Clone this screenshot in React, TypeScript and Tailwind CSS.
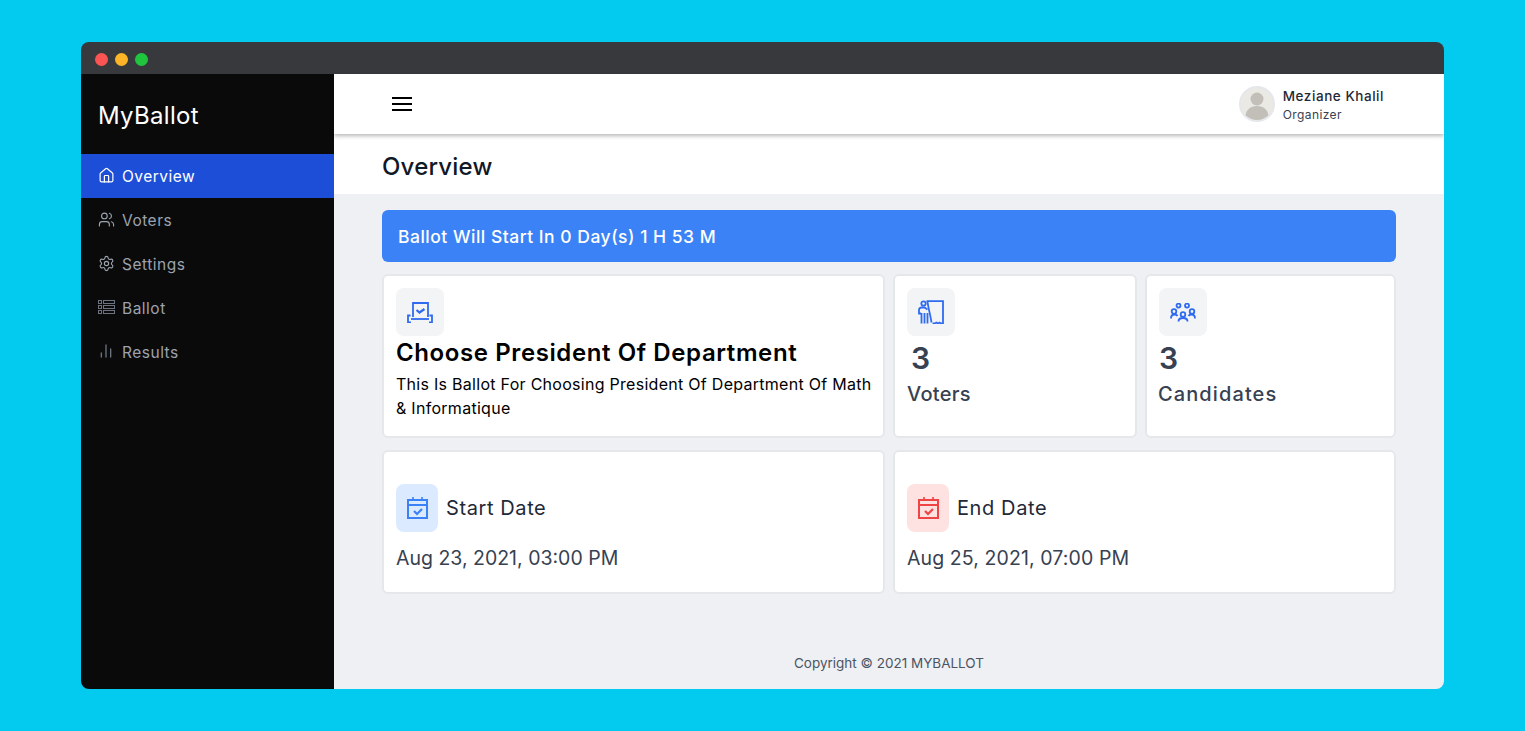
import React from "react";
import { Home, Users, Settings, ChartNoAxesColumn } from "lucide-react";

const BallotListIcon = ({ className }: { className?: string }) => (
  <svg viewBox="0 0 17 16" fill="none" stroke="currentColor" strokeWidth="1" className={className}>
    <rect x="0.5" y="1.500" width="3" height="3" />
    <rect x="0.5" y="6.500" width="3" height="3" />
    <rect x="0.5" y="11.500" width="3" height="3" />
    <rect x="5.500" y="1.500" width="11" height="3" />
    <rect x="5.500" y="6.500" width="11" height="3" />
    <rect x="5.500" y="11.500" width="11" height="3" />
  </svg>
);

const VoteBoxIcon = () => (
  <svg viewBox="0 0 26 21" fill="none" stroke="#2f6bf0" strokeWidth="1.800" className="w-[26px] h-[21px]">
    <path d="M6 15V1h15v14" />
    <path d="M9.500 8l3 2.500 5-3.500" strokeWidth="2.200" />
    <path d="M4 17h18" />
    <path d="M3.500 13.500H1v7h3M22.500 13.500H25v7h-3" />
  </svg>
);

const BoothIcon = () => (
  <svg viewBox="0 0 26 24" fill="none" stroke="#2f6bf0" strokeWidth="1.800" className="w-[26px] h-[24px]">
    <circle cx="5.500" cy="3.500" r="2.200" />
    <path d="M8.500 1.200h16.500v22.300h-2l-1.500-1-1.500 1-1.500-1-2 1h-2" />
    <path d="M9.500 1.500c.5 5 3 14 4 21" />
    <path d="M9.500 9.500L6.500 7.500H3.500C2 7.500 1 8.500 1 10v3.500h2" />
    <path d="M3.500 13v10.500M6.500 13v10.500M9.500 13v10.500" />
  </svg>
);

const GroupIcon = () => (
  <svg viewBox="0 0 26 19" fill="none" stroke="#2f6bf0" strokeWidth="1.800" className="w-[26px] h-[19px]">
    <circle cx="8.500" cy="2.600" r="2" />
    <circle cx="17" cy="2.600" r="2" />
    <circle cx="4" cy="8.500" r="2.300" />
    <circle cx="22" cy="8.500" r="2.300" />
    <circle cx="13" cy="11.500" r="2.300" />
    <path d="M1 15.500c0-2.500 1.500-4 3.500-4 1.500 0 2.500.5 3 1.500M25 15.500c0-2.500-1.500-4-3.500-4-1.500 0-2.500.5-3 1.500" />
    <path d="M8.500 18.500c0-2.500 2-3.500 4.500-3.500s4.500 1 4.500 3.500" />
  </svg>
);

const CalendarIcon = ({ color }: { color: string }) => (
  <svg viewBox="0 0 21 22" fill="none" stroke={color} strokeWidth="2" className="w-[21px] h-[22px]">
    <rect x="1" y="3" width="19" height="18" />
    <path d="M1 8h19" />
    <path d="M6 0v4M15 0v4" strokeWidth="1.600" />
    <path d="M7 14l3 3 5-5" strokeWidth="2.200" />
  </svg>
);

const NavItem = ({ label, icon, active }: { label: string; icon: React.ReactNode; active?: boolean }) => (
  <div
    className={`h-[44px] flex items-center gap-2 pl-[17px] text-[15.500px] tracking-[0.5px] ${
      active ? "bg-[#1d4ed8] text-white" : "text-[#9ca3af]"
    }`}
  >
    <span className="w-4 h-4 flex items-center justify-center -mt-[2px]">{icon}</span>
    <span className="mt-[1px]">{label}</span>
  </div>
);

const Card = ({ children, className }: { children: React.ReactNode; className?: string }) => (
  <div className={`bg-white border-2 border-[#e5e7eb] rounded-md px-3 ${className ?? ""}`}>{children}</div>
);

const IconBox = ({ children, bg, className }: { children: React.ReactNode; bg?: string; className?: string }) => (
  <div className={`h-12 rounded-lg flex items-center justify-center ${className ?? "w-12"} ${bg ?? "bg-[#f3f4f6]"}`}>
    {children}
  </div>
);

export default function App() {
  return (
    <div
      className="w-full h-[731px] bg-[#03cbf0] pt-[42px] pl-[81px] overflow-hidden"
      style={{ fontFamily: '"Inter", "Noto Sans", sans-serif' }}
    >
      <div className="w-[1363px] h-[647px] rounded-lg overflow-hidden flex flex-col">
        <div className="h-8 bg-[#37393c] flex items-center gap-[7px] pl-[14px] pt-[2px] shrink-0">
          <span className="w-[13px] h-[13px] rounded-full bg-[#fc5453]" />
          <span className="w-[13px] h-[13px] rounded-full bg-[#fdb427]" />
          <span className="w-[13px] h-[13px] rounded-full bg-[#1fc63d]" />
        </div>
        <div className="flex flex-1 min-h-0">
          <aside className="w-[253px] bg-[#0a0a0a] shrink-0">
            <div className="h-20 flex items-center pl-[17px] pt-1 text-white text-[24px] tracking-[0.3px]">MyBallot</div>
            <NavItem active label="Overview" icon={<Home className="w-[17px] h-[17px] shrink-0" strokeWidth={1.7} />} />
            <NavItem label="Voters" icon={<Users className="w-[17px] h-[17px] shrink-0" strokeWidth={1.6} />} />
            <NavItem label="Settings" icon={<Settings className="w-[17px] h-[17px] shrink-0" strokeWidth={1.6} />} />
            <NavItem label="Ballot" icon={<BallotListIcon className="w-[17px] h-4 shrink-0 text-[#6b7280]" />} />
            <NavItem label="Results" icon={<ChartNoAxesColumn className="w-4 h-4 shrink-0 text-[#6b7280]" strokeWidth={2} />} />
          </aside>
          <div className="flex-1 flex flex-col min-w-0 bg-[#eff0f4]">
            <header className="h-[60px] bg-white flex items-center justify-between pl-[58px] pr-[60px] shadow-[0_2px_4px_rgba(0,0,0,0.28)] relative shrink-0">
              <div className="w-5 flex flex-col gap-[4px]">
                <span className="h-[2px] bg-black" />
                <span className="h-[2px] bg-black" />
                <span className="h-[2px] bg-black" />
              </div>
              <div className="flex items-center gap-2">
                <div className="w-9 h-9 rounded-full bg-[#ebe9e4] border-2 border-[#e5e7eb] overflow-hidden">
                  <svg viewBox="0 0 32 32" className="w-full h-full">
                    <circle cx="16" cy="11" r="6.500" fill="#c2bfb8" />
                    <path d="M4 32c0-9 4-14 12-14s12 5 12 14z" fill="#c2bfb8" />
                  </svg>
                </div>
                <div className="flex flex-col">
                  <span className="text-[13.500px] font-medium leading-[20px] tracking-[0.55px] text-[#1f2937]">
                    Meziane Khalil
                  </span>
                  <span className="text-[12px] leading-[16px] tracking-[0.4px] text-[#374151] mt-[1px]">Organizer</span>
                </div>
              </div>
            </header>
            <div className="h-[60px] bg-white flex items-center pl-12 pt-[6px] text-[24px] font-medium tracking-[0.2px] text-[#111827] shrink-0">
              Overview
            </div>
            <main className="flex-1 px-12 pt-4 flex flex-col">
              <div className="h-[52px] bg-[#3b82f6] rounded-md flex items-center px-4 pt-[2px] text-white text-[17.500px] font-medium tracking-[0.5px]">
                Ballot Will Start In 0 Day(s) 1 H 53 M
              </div>
              <div className="mt-3 grid grid-cols-[503px_244px_251px] gap-2 h-[164px]">
                <Card className="pt-3">
                  <IconBox>
                    <VoteBoxIcon />
                  </IconBox>
                  <div className="text-[24px] leading-[34px] font-semibold tracking-[0.6px] text-black">
                    Choose President Of Department
                  </div>
                  <div className="text-[16px] leading-[24px] tracking-[0.28px] text-black mt-[2px] whitespace-nowrap">
                    This Is Ballot For Choosing President Of Department Of Math
                    <br />
                    &amp; Informatique
                  </div>
                </Card>
                <Card className="pt-3">
                  <IconBox>
                    <BoothIcon />
                  </IconBox>
                  <div className="text-[30px] leading-[36px] font-semibold text-[#374151] mt-[4px] pl-1">3</div>
                  <div className="text-[20px] leading-[28px] font-medium tracking-[0.3px] text-[#374151] mt-[4px]">
                    Voters
                  </div>
                </Card>
                <Card className="pt-3">
                  <IconBox>
                    <GroupIcon />
                  </IconBox>
                  <div className="text-[30px] leading-[36px] font-semibold text-[#374151] mt-[4px]">3</div>
                  <div className="text-[20px] leading-[28px] font-medium tracking-[1.1px] text-[#374151] mt-[4px] -ml-[1px]">
                    Candidates
                  </div>
                </Card>
              </div>
              <div className="mt-3 grid grid-cols-2 gap-2 h-[144px]">
                <Card className="pt-8">
                  <div className="flex items-center gap-2">
                    <IconBox bg="bg-[#dbeafe]" className="w-[42px]">
                      <CalendarIcon color="#3b82f6" />
                    </IconBox>
                    <span className="text-[20px] tracking-[0.6px] text-[#1f2937]">Start Date</span>
                  </div>
                  <div className="mt-3 text-[19.500px] leading-[28px] text-[#374151]">Aug 23, 2021, 03:00 PM</div>
                </Card>
                <Card className="pt-8">
                  <div className="flex items-center gap-2">
                    <IconBox bg="bg-[#fee2e2]" className="w-[42px]">
                      <CalendarIcon color="#ef4444" />
                    </IconBox>
                    <span className="text-[20px] tracking-[0.6px] text-[#1f2937]">End Date</span>
                  </div>
                  <div className="mt-3 text-[19.500px] leading-[28px] tracking-[0.1px] text-[#374151]">Aug 25, 2021, 07:00 PM</div>
                </Card>
              </div>
              <div className="mt-[59px] text-center text-[13.500px] leading-[20px] text-[#4b5563]">
                Copyright © 2021 MYBALLOT
              </div>
            </main>
          </div>
        </div>
      </div>
    </div>
  );
}
